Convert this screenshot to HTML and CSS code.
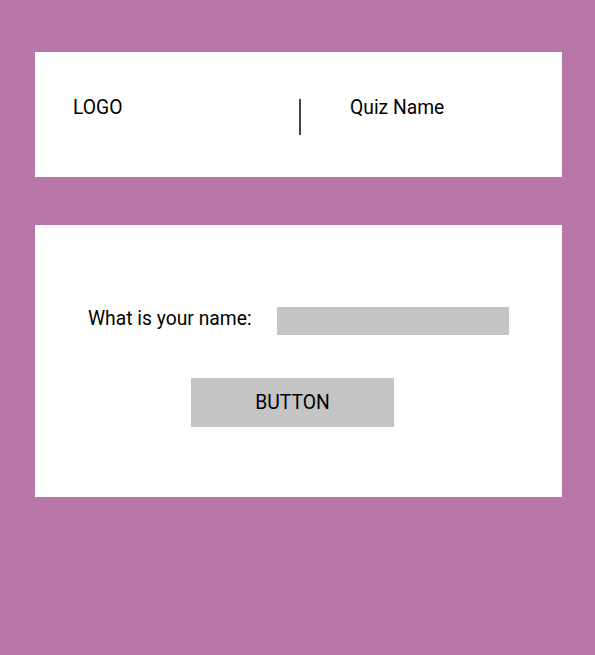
FILE: index.html
```html
<!DOCTYPE html>
<html lang="en">
<head>
<meta charset="utf-8">
<title>Quiz</title>
<link rel="stylesheet" href="styles.css">
</head>
<body>
<div class="page">
  <header class="card header">
    <div class="logo">LOGO</div>
    <div class="divider"></div>
    <div class="quiz-name">Quiz Name</div>
  </header>
  <main class="card main">
    <div class="name-row">
      <label class="name-label" for="name">What is your name:</label>
      <input class="name-input" id="name" type="text">
    </div>
    <button class="btn" type="button">BUTTON</button>
  </main>
</div>
</body>
</html>
```

FILE: styles.css
```css
html, body {
  margin: 0;
  padding: 0;
}
body {
  background: #b877a8;
  font-family: Roboto, "Liberation Sans", sans-serif;
  font-size: 19.3px;
  line-height: 22px;
  color: #000;
  width: 595px;
  height: 655px;
}
.page {
  padding: 52px 0 0 35px;
  display: flex;
  flex-direction: column;
  gap: 48px;
}
.card {
  background: #fff;
  width: 527px;
  box-sizing: border-box;
}
.header {
  height: 125px;
  display: flex;
  align-items: flex-start;
  padding: 45px 0 0 38px;
}
.logo {
  width: 226px;
}
.divider {
  width: 2px;
  height: 36px;
  margin-top: 2px;
  background: #444;
}
.quiz-name {
  margin-left: 49px;
}
.main {
  height: 272px;
  padding-top: 82px;
  display: flex;
  flex-direction: column;
  align-items: flex-start;
  gap: 43px;
}
.name-row {
  display: flex;
  align-items: flex-start;
  padding-left: 53px;
  gap: 24px;
}
.name-label {
  margin-top: 1px;
  width: 165px;
}
.name-input {
  width: 232px;
  height: 28px;
  box-sizing: border-box;
  border: none;
  background: #c4c4c4;
  margin: 0;
  padding: 0;
}
.btn {
  margin-left: 156px;
  width: 203px;
  height: 49px;
  border: none;
  background: #c4c4c4;
  font-family: inherit;
  font-size: 19.3px;
  color: #000;
  padding: 0;
  cursor: pointer;
}
```
